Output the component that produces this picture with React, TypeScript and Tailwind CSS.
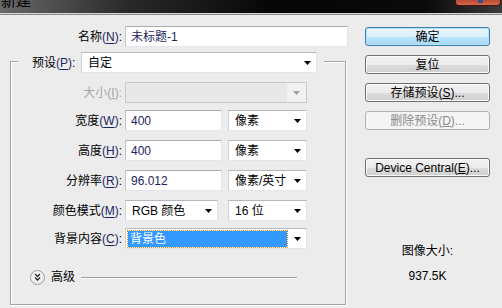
import type { ReactNode } from 'react';

const FONT = { fontFamily: '"Liberation Sans", "Noto Sans CJK SC", sans-serif' };

function Key({ k }: { k: string }) {
  return (
    <span className="text-[#1b2660]">
      (<span className="underline underline-offset-[2px]">{k}</span>)
    </span>
  );
}

function Arrow({ disabled = false }: { disabled?: boolean }) {
  return (
    <svg width="7" height="4" viewBox="0 0 7 4" className="shrink-0">
      <polygon points="0,0 7,0 3.5,4" fill={disabled ? '#a0a0a0' : '#000'} />
    </svg>
  );
}

function Field({ value, width }: { value: string; width: string }) {
  return (
    <div
      className={`${width} h-[21px] flex items-center pl-[5px] bg-white border border-t-[#a9abb2] border-l-[#c4c6cc] border-r-[#dfe3ea] border-b-[#e3e6eb] text-[12px] text-[#1b2660]`}
    >
      {value}
    </div>
  );
}

function Select({ value, width, highlight = false }: { value: string; width: string; highlight?: boolean }) {
  return (
    <div
      className={`${width} h-[21px] flex items-center justify-between bg-white border border-t-[#b5b7bd] border-l-[#d0d2d6] border-r-[#dfe3ea] border-b-[#e3e6eb] pr-[5px] text-[12px] text-black`}
    >
      {highlight ? (
        <span className="ml-[2px] h-[16px] w-[159px] flex items-center pl-[2px] bg-[#3399ff] text-white outline-1 outline-dotted outline-[#e08a1a]">
          {value}
        </span>
      ) : (
        <span className="pl-[6px]">{value}</span>
      )}
      <Arrow />
    </div>
  );
}

function Row({ label, children, className = '' }: { label: ReactNode; children: ReactNode; className?: string }) {
  return (
    <div className={`flex items-center ${className}`}>
      <div className="w-[111px] text-right text-[12px] text-black whitespace-nowrap">{label}</div>
      <div className="ml-[3px] flex gap-[6px]">{children}</div>
    </div>
  );
}

function Button({ children, primary = false, disabled = false }: { children: ReactNode; primary?: boolean; disabled?: boolean }) {
  const look = disabled
    ? 'border-[#adb2b5] bg-[#f4f4f4] text-[#8a8a8a]'
    : primary
      ? 'border-[#3c7fb1] bg-[linear-gradient(#eaf6fd_0%,#d9f0fc_50%,#bee6fd_51%,#a7d9f5_100%)] text-black shadow-[inset_0_0_0_1px_#b6e2fa]'
      : 'border-[#707070] bg-[linear-gradient(#f2f2f2_0%,#ebebeb_50%,#dddddd_51%,#cfcfcf_100%)] text-black shadow-[inset_0_0_0_1px_#fbfbfb]';
  return (
    <div className={`w-[125px] h-[19px] rounded-[3px] border flex items-center justify-center text-[12px] ${look}`}>
      {children}
    </div>
  );
}

export default function App() {
  return (
    <div className="w-[502px] h-[308px] overflow-hidden bg-[#ececec] select-none" style={FONT}>
      {/* Title bar */}
      <div className="h-[13px] flex items-start bg-[linear-gradient(90deg,#6a6a6a_0%,#2a2a2a_25%,#050505_55%,#0a0a0a_85%,#3a3a3a_100%)] overflow-hidden">
        <span className="text-[15px] leading-[15px] -mt-[7px] ml-[1px] text-black">新建</span>
        <div className="ml-auto mr-[1px] w-[46px] h-[6px] rounded-b-[4px] border border-t-0 border-[#4a1208] bg-[linear-gradient(#b84a32,#d26a4c)] flex justify-center">
          <span className="w-[5px] h-[3px] bg-[#3b4f86] ml-[4px]" />
        </div>
      </div>
      <div className="h-px bg-[#d6d6d6]" />
      <div className="h-px bg-[#8a8a8a]" />

      <div className="flex">
        {/* Form column */}
        <div className="w-[350px] pt-[11px]">
          <div className="flex items-center">
            <div className="w-[122px] text-right text-[12px] text-black">
              名称<Key k="N" />:
            </div>
            <div className="ml-[3px]">
              <Field value="未标题-1" width="w-[223px]" />
            </div>
          </div>

          <div className="ml-[10px] mt-[14px] w-[336px] border border-[#a3a3a3] shadow-[inset_1px_1px_0_#fff,1px_1px_0_#fff] pb-[18px]">
            {/* Legend row */}
            <div className="-mt-[10px] ml-[7px] w-[306px] bg-[#ececec] flex items-center pl-[14px]">
              <span className="text-[12px] text-black w-[49px] whitespace-nowrap">
                预设<Key k="P" />:
              </span>
              <Select value="自定" width="w-[236px]" />
            </div>

            <Row className="mt-[9px]" label={<span className="text-[#a6a6a6]">大小(<span className="underline">I</span>):</span>}>
              <div className="w-[182px] h-[21px] flex items-center justify-end border border-[#c9c9c9] bg-[#e8e8e8]">
                <div className="w-[19px] h-full flex items-center justify-center bg-[#f1f1f1]">
                  <Arrow disabled />
                </div>
              </div>
            </Row>

            <Row className="mt-[7px]" label={<>宽度<Key k="W" />:</>}>
              <Field value="400" width="w-[97px]" />
              <Select value="像素" width="w-[79px]" />
            </Row>

            <Row className="mt-[9px]" label={<>高度<Key k="H" />:</>}>
              <Field value="400" width="w-[97px]" />
              <Select value="像素" width="w-[79px]" />
            </Row>

            <Row className="mt-[9px]" label={<>分辨率<Key k="R" />:</>}>
              <Field value="96.012" width="w-[97px]" />
              <Select value="像素/英寸" width="w-[79px]" />
            </Row>

            <Row className="mt-[9px]" label={<>颜色模式<Key k="M" />:</>}>
              <div className="flex gap-[10px]">
                <Select value="RGB 颜色" width="w-[93px]" />
                <Select value="16 位" width="w-[79px]" />
              </div>
            </Row>

            <Row className="mt-[7px]" label={<>背景内容<Key k="C" />:</>}>
              <Select value="背景色" width="w-[182px]" highlight />
            </Row>

            {/* Advanced */}
            <div className="mt-[19px] ml-[19px] flex items-center">
              <div className="w-[15px] h-[15px] rounded-full border border-[#9a9a9a] bg-[radial-gradient(circle_at_40%_35%,#ffffff,#e4e4e4)] flex items-center justify-center">
                <svg width="7" height="8" viewBox="0 0 7 8">
                  <polyline points="1,1 3.5,3.5 6,1" fill="none" stroke="#222" strokeWidth="1.3" />
                  <polyline points="1,4.5 3.5,7 6,4.5" fill="none" stroke="#222" strokeWidth="1.3" />
                </svg>
              </div>
              <span className="ml-[6px] text-[12px] text-black">高级</span>
              <div className="ml-[6px] w-[216px] h-px bg-[#a0a0a0] shadow-[0_1px_0_#fff]" />
            </div>
          </div>
        </div>

        {/* Buttons column */}
        <div className="pl-[15px] pt-[12px] w-[152px]">
          <div className="flex flex-col gap-[9px]">
            <Button primary>确定</Button>
            <Button>复位</Button>
            <Button>
              存储预设<span>(<span className="underline">S</span>)...</span>
            </Button>
            <Button disabled>
              删除预设<span>(<span className="underline">D</span>)...</span>
            </Button>
          </div>
          <div className="mt-[28px]">
            <Button>
              Device Central(<span className="underline">E</span>)...
            </Button>
          </div>
          <div className="w-[125px] mt-[66px] text-center text-[12px] leading-[16px] text-black">
            <div>图像大小:</div>
            <div className="mt-[9px]">937.5K</div>
          </div>
        </div>
      </div>
    </div>
  );
}
